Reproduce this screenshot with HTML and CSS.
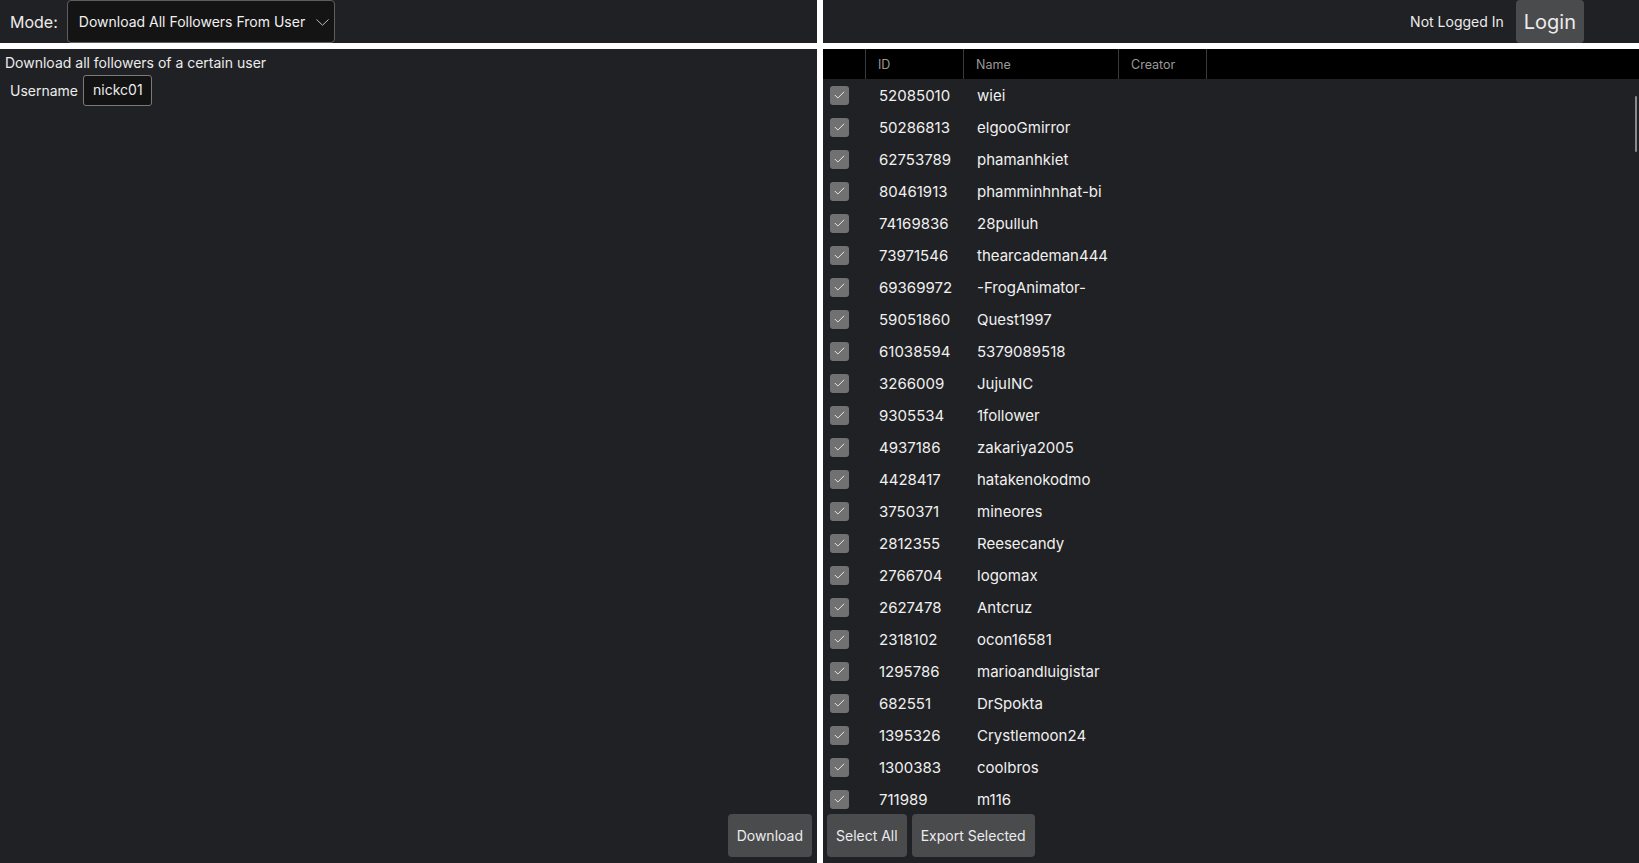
FILE: index.html
```html
<!DOCTYPE html>
<html>
<head>
<meta charset="utf-8">
<link rel="stylesheet" href="styles.css">
</head>
<body>
<div class="app">
  <div class="cell top-left">
    <span class="mode-label">Mode:</span>
    <div class="select">
      <span class="select-text">Download All Followers From User</span>
      <svg class="chev" width="13" height="7" viewBox="0 0 13 7"><path d="M0.5 0.5 L6.5 6.2 L12.5 0.5" fill="none" stroke="#bbb" stroke-width="1"/></svg>
    </div>
  </div>
  <div class="cell top-right">
    <span class="status">Not Logged In</span>
    <button class="btn login">Login</button>
  </div>
  <div class="cell bottom-left">
    <div class="desc">Download all followers of a certain user</div>
    <div class="field">
      <span class="field-label">Username</span>
      <div class="input">nickc01</div>
    </div>
    <div class="spacer"></div>
    <div class="left-foot">
      <button class="btn">Download</button>
    </div>
  </div>
  <div class="cell bottom-right">
    <div class="thead">
      <div class="th"></div>
      <div class="th">ID</div>
      <div class="th">Name</div>
      <div class="th">Creator</div>
    </div>
    <div class="tbody" id="tbody"></div>
    <div class="thumb"></div>
    <div class="right-foot">
      <button class="btn">Select All</button>
      <button class="btn">Export Selected</button>
    </div>
  </div>
</div>
<script src="script.js"></script>
</body>
</html>
```
FILE: script.js
```js
var rows = [
  ["52085010","wiei"],["50286813","elgooGmirror"],["62753789","phamanhkiet"],
  ["80461913","phamminhnhat-bi"],["74169836","28pulluh"],["73971546","thearcademan444"],
  ["69369972","-FrogAnimator-"],["59051860","Quest1997"],["61038594","5379089518"],
  ["3266009","JujuINC"],["9305534","1follower"],["4937186","zakariya2005"],
  ["4428417","hatakenokodmo"],["3750371","mineores"],["2812355","Reesecandy"],
  ["2766704","logomax"],["2627478","Antcruz"],["2318102","ocon16581"],
  ["1295786","marioandluigistar"],["682551","DrSpokta"],["1395326","Crystlemoon24"],
  ["1300383","coolbros"],["711989","m116"]
];
var tb = document.getElementById("tbody");
var html = "";
rows.forEach(function(r){
  html += '<div class="tr"><div class="td"><span class="cb"><svg width="11" height="8" viewBox="0 0 11 8"><path d="M0.8 4 L3.8 7 L10.2 0.8" fill="none" stroke="#e6e6e6" stroke-width="1"/></svg></span></div>' +
    '<div class="td">' + r[0] + '</div><div class="td">' + r[1] + '</div><div class="td"></div></div>';
});
tb.innerHTML = html;
```
FILE: styles.css
```css
* { box-sizing: border-box; }
html, body { margin: 0; padding: 0; height: 100%; }
body {
  background: #ffffff;
  font-family: Inter, "Liberation Sans", sans-serif;
  color: #ececec;
  overflow: hidden;
}
.app {
  display: grid;
  grid-template-columns: 817px 1fr;
  grid-template-rows: 43px 1fr;
  gap: 6px;
  height: 100vh;
}
.cell { background: #202124; min-height: 0; position: relative; }

.top-left { display: flex; align-items: center; padding-left: 10px; }
.mode-label { font-size: 16px; margin-right: 9px; }
.select {
  height: 43px;
  width: 268px;
  background: #141414;
  border: 1px solid #5e5e5e;
  border-radius: 4px;
  display: flex;
  align-items: center;
  padding-left: 11px;
  font-size: 14px;
  color: #f0f0f0;
}
.select-text { white-space: nowrap; }
.chev { margin-left: 11px; margin-top: 1px; flex: none; }

.top-right { display: flex; align-items: center; justify-content: flex-end; padding-right: 55px; }
.status { font-size: 14px; margin-right: 12px; }

.btn {
  background: #4a4b4d;
  color: #ececec;
  border: none;
  border-radius: 4px;
  font-family: Inter, "Liberation Sans", sans-serif;
  font-size: 14px;
  height: 43px;
  padding: 0 9px;
  cursor: pointer;
  white-space: nowrap;
}
.login { font-size: 20px; height: 43px; padding: 0 8px; }

.bottom-left { display: flex; flex-direction: column; padding: 5px 5px 6px 5px; }
.desc { font-size: 14px; line-height: 18px; }
.field { display: flex; align-items: center; margin-top: 3px; padding-left: 5px; }
.field-label { font-size: 14px; margin-right: 5px; }
.input {
  height: 31px;
  background: #131313;
  border: 1px solid #7a7a7a;
  border-radius: 3px;
  padding: 0 8px 3px 9px;
  display: flex;
  align-items: center;
  font-size: 14px;
}
.spacer { flex: 1; }
.left-foot { display: flex; justify-content: flex-end; }

.bottom-right { display: flex; flex-direction: column; }
.thead {
  display: grid;
  grid-template-columns: 43px 98px 155px 88px;
  background: #000;
  height: 30px;
  flex: none;
}
.th {
  border-right: 1px solid #3a3a3a;
  font-size: 12.5px;
  color: #9a9a9a;
  display: flex;
  align-items: center;
  padding-left: 12px;
}
.tbody { flex: 1; overflow: hidden; min-height: 0; }
.tr {
  display: grid;
  grid-template-columns: 43px 98px 155px 88px;
  height: 32px;
  align-items: center;
}
.td { font-size: 15px; padding-left: 13px; color: #f0f0f0; }
.td:first-child { padding-left: 7px; display: flex; align-items: center; }
.cb {
  width: 19px;
  height: 19px;
  background: #717171;
  border-radius: 3px;
  display: flex;
  align-items: center;
  justify-content: center;
}
.thumb {
  position: absolute;
  right: 2px;
  top: 47px;
  width: 2px;
  height: 56px;
  background: #8a8a8a;
  border-radius: 1px;
}
.right-foot { display: flex; gap: 5px; padding: 2px 4px 6px 4px; flex: none; }
```
